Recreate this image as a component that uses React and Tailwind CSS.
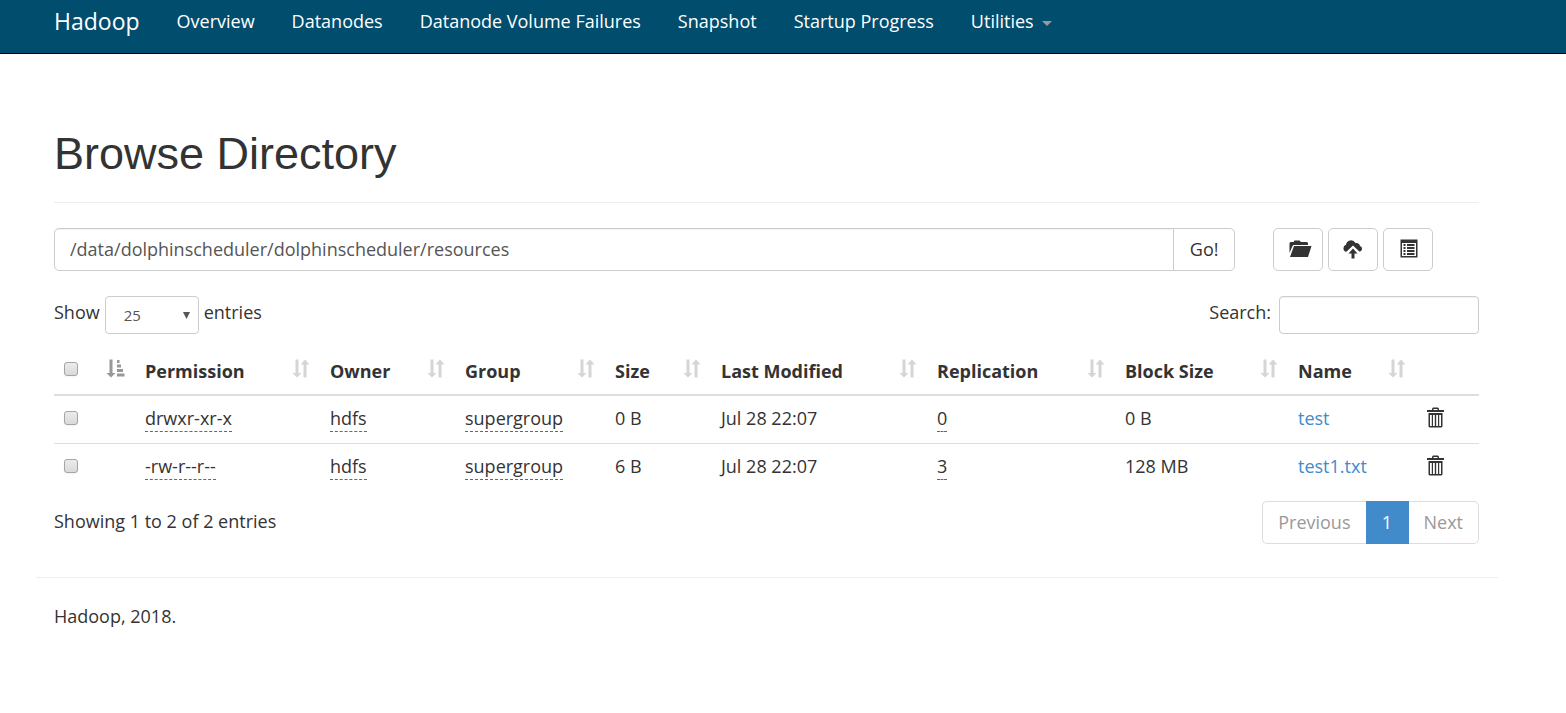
import { useState } from "react";

const navLinks = ["Overview", "Datanodes", "Datanode Volume Failures", "Snapshot", "Startup Progress"];

const columns = [
  { label: "Permission", width: "w-[185px]" },
  { label: "Owner", width: "w-[135px]" },
  { label: "Group", width: "w-[150px]" },
  { label: "Size", width: "w-[106px]" },
  { label: "Last Modified", width: "w-[216px]" },
  { label: "Replication", width: "w-[188px]" },
  { label: "Block Size", width: "w-[173px]" },
  { label: "Name", width: "w-[128px]" },
];

const files = [
  { permission: "drwxr-xr-x", owner: "hdfs", group: "supergroup", size: "0 B", modified: "Jul 28 22:07", replication: "0", block: "0 B", name: "test" },
  { permission: "-rw-r--r--", owner: "hdfs", group: "supergroup", size: "6 B", modified: "Jul 28 22:07", replication: "3", block: "128 MB", name: "test1.txt" },
];

function FolderIcon() {
  return (
    <svg width="23" height="18" viewBox="0 0 23 18" fill="#333">
      <path d="M.5 13V3L1.5 2H4.5L5.5 .5H10.5L12 2H18L19 3V5H4.5L3.5 6Z" />
      <path d="M5 6H22.5L19 17H1Z" />
    </svg>
  );
}

function UploadIcon() {
  return (
    <svg width="20" height="19" viewBox="0 0 20 19" fill="#333">
      <path d="M3.4 11.8A3.6 3.6 0 0 1 3 4.8A5 5 0 0 1 12.4 3A4 4 0 0 1 17 6A3 3 0 0 1 16.6 11.8L10 5.6Z" />
      <path d="M10 8.5L14.5 13.5H11.5V18.5H8.5V13.5H5.5Z" />
    </svg>
  );
}

function ListIcon() {
  return (
    <svg width="18" height="19" viewBox="0 0 18 19" fill="#333">
      <path fillRule="evenodd" d="M.5.5H17.5V18.5H.5ZM2 4V17H16V4Z" />
      <path d="M3.5 5H5.5V7H3.5ZM7 5H14.5V7H7ZM3.5 8H5.5V10H3.5ZM7 8H14.5V10H7ZM3.5 11H5.5V13H3.5ZM7 11H14.5V13H7ZM3.5 14H5.5V16H3.5ZM7 14H14.5V16H7Z" />
    </svg>
  );
}

function TrashIcon() {
  return (
    <svg width="18" height="21" viewBox="0 0 18 21" fill="#333">
      <path fillRule="evenodd" d="M6 3V1.8L7 .5H12L13 1.8V3H18V5H1V3ZM7.5 3H11.5V2H7.5Z" />
      <path fillRule="evenodd" d="M2.5 6H16.5V19.5L15.5 20.5H3.5L2.5 19.5ZM4 8V19H5.8V8ZM7 8V19H8.8V8ZM10.2 8V19H12V8ZM13.2 8V19H15V8Z" />
    </svg>
  );
}

function SortIcon() {
  return (
    <svg width="18" height="19" viewBox="0 0 18 19" fill="#333" className="opacity-20">
      <path d="M3.5.5H6.5V14H9.5L5 18.5L.5 14H3.5Z" />
      <path d="M11.5 18.5H14.5V5.5H17.5L13 .5L8.5 5.5H11.5Z" />
    </svg>
  );
}

function SortAscIcon() {
  return (
    <svg width="19" height="19" viewBox="0 0 19 19" fill="#333" className="opacity-50">
      <path d="M3.5.5H6.5V14H9.5L5 18.5L.5 14H3.5Z" />
      <path d="M11 1H13.5V4H11ZM11 5.5H15V8.5H11ZM11 10H17V13H11ZM11 14.5H18.5V17.5H11Z" />
    </svg>
  );
}

function Checkbox({ label, checked, onChange }) {
  return (
    <input
      type="checkbox"
      aria-label={label}
      checked={checked}
      onChange={onChange}
      className="block w-3.5 h-3.5 appearance-none rounded-[3px] border border-[#a5a5a5] bg-linear-to-b from-[#ececec] to-[#d9d9d9] shadow-xs checked:bg-[#428bca]"
    />
  );
}

function Editable({ children }) {
  return <span className="inline-block leading-[26px] border-b border-dashed border-[#0088cc]">{children}</span>;
}

export default function App() {
  const [path, setPath] = useState("/data/dolphinscheduler/dolphinscheduler/resources");
  const [search, setSearch] = useState("");
  const [pageSize, setPageSize] = useState("25");
  const [selected, setSelected] = useState([]);

  const toggle = (name) => {
    setSelected((prev) => (prev.includes(name) ? prev.filter((n) => n !== name) : [...prev, name]));
  };
  const toggleAll = () => {
    setSelected((prev) => (prev.length === files.length ? [] : files.map((f) => f.name)));
  };

  return (
    <div className="bg-white text-[#333] text-lg leading-[26px] font-['Open_Sans','Noto_Sans',sans-serif]">
      <header className="h-[54px] bg-[#004d6e] border-b border-black text-white">
        <nav className="flex items-center h-[42px] pl-[54px] gap-[37px] whitespace-nowrap">
          <a href="#" className="text-[23px]">Hadoop</a>
          {navLinks.map((link) => (
            <a key={link} href="#">{link}</a>
          ))}
          <a href="#" className="flex items-center gap-2">
            Utilities
            <svg width="10" height="5" viewBox="0 0 10 5" fill="#999" className="mt-1"><path d="M0 0H10L5 5Z" /></svg>
          </a>
        </nav>
      </header>

      <div className="pl-9 pr-[68px]">
        <main className="pl-[18px] pr-[19px] pt-[75px]">
          <h1 className="pb-6 border-b border-[#eee] text-[45px] leading-[49px] font-['Liberation_Sans',sans-serif]">
            Browse Directory
          </h1>

          <div className="grid grid-cols-12 gap-[38px] mt-[25px]">
            <form className="col-span-10 flex h-[43px]" onSubmit={(e) => e.preventDefault()}>
              <input
                type="text"
                aria-label="Directory"
                value={path}
                onChange={(e) => setPath(e.target.value)}
                className="grow min-w-0 px-[15px] pb-0.5 rounded-l-[5px] border border-[#ccc] text-[#555] inset-shadow-xs"
              />
              <button type="submit" className="w-[62px] -ml-px pb-0.5 rounded-r-[5px] border border-[#ccc]">Go!</button>
            </form>
            <div className="col-span-2 flex gap-[5px]">
              <button type="button" aria-label="Create directory" className="flex items-center justify-center w-[50px] h-[43px] pl-1 pb-0.5 rounded-[5px] border border-[#ccc]">
                <FolderIcon />
              </button>
              <button type="button" aria-label="Upload files" className="flex items-center justify-center w-[50px] h-[43px] rounded-[5px] border border-[#ccc]">
                <UploadIcon />
              </button>
              <button type="button" aria-label="Cut and paste" className="flex items-center justify-center w-[50px] h-[43px] pl-0.5 pb-0.5 rounded-[5px] border border-[#ccc]">
                <ListIcon />
              </button>
            </div>
          </div>

          <div className="flex justify-between mt-[25px]">
            <label className="flex gap-[5px]">
              <span className="pt-[3px]">Show</span>
              <span className="relative">
                <select
                  value={pageSize}
                  onChange={(e) => setPageSize(e.target.value)}
                  className="w-[94px] h-[38px] pl-[18px] appearance-none rounded-sm border border-[#ccc] text-[#555] text-[15px] bg-white"
                >
                  <option>10</option>
                  <option>25</option>
                  <option>50</option>
                  <option>100</option>
                </select>
                <svg width="7" height="7" viewBox="0 0 8 8" fill="#555" className="absolute right-[9px] top-4 pointer-events-none">
                  <path d="M0 0H8L4 8Z" />
                </svg>
              </span>
              <span className="pt-[3px]">entries</span>
            </label>
            <label className="flex gap-2">
              <span className="pt-[3px]">Search:</span>
              <input
                type="search"
                value={search}
                onChange={(e) => setSearch(e.target.value)}
                className="w-[200px] h-[38px] px-3 rounded-sm border border-[#ccc] text-[15px] inset-shadow-xs"
              />
            </label>
          </div>

          <table className="w-full table-fixed mt-[13px] text-left whitespace-nowrap">
            <thead>
              <tr className="h-12 border-b-2 border-[#ddd]">
                <th className="w-[81px] px-2.5">
                  <div className="flex items-center justify-between pb-1">
                    <Checkbox label="Select all" checked={selected.length === files.length} onChange={toggleAll} />
                    <SortAscIcon />
                  </div>
                </th>
                {columns.map((col) => (
                  <th key={col.label} className={`${col.width} px-2.5 font-bold`}>
                    <div className="flex items-center justify-between">
                      {col.label}
                      <span className="pb-1"><SortIcon /></span>
                    </div>
                  </th>
                ))}
                <th className="w-[63px]"></th>
              </tr>
            </thead>
            <tbody>
              {files.map((file) => (
                <tr key={file.name} className="h-12 border-b border-[#ddd] last:border-b-0">
                  <td className="px-2.5 pb-0.5">
                    <Checkbox label={`Select ${file.name}`} checked={selected.includes(file.name)} onChange={() => toggle(file.name)} />
                  </td>
                  <td className="px-2.5 pb-0.5"><Editable>{file.permission}</Editable></td>
                  <td className="px-2.5 pb-0.5"><Editable>{file.owner}</Editable></td>
                  <td className="px-2.5 pb-0.5"><Editable>{file.group}</Editable></td>
                  <td className="px-2.5 pb-0.5">{file.size}</td>
                  <td className="px-2.5 pb-0.5">{file.modified}</td>
                  <td className="px-2.5 pb-0.5"><Editable>{file.replication}</Editable></td>
                  <td className="px-2.5 pb-0.5">{file.block}</td>
                  <td className="px-2.5 pb-0.5"><a href="#" className="text-[#428bca]">{file.name}</a></td>
                  <td className="px-2.5 pb-1">
                    <button type="button" aria-label={`Delete ${file.name}`} className="block"><TrashIcon /></button>
                  </td>
                </tr>
              ))}
            </tbody>
          </table>

          <div className="flex justify-between mt-2.5">
            <p className="pt-[7px]">Showing 1 to 2 of 2 entries</p>
            <div className="flex h-[43px] text-[#999]">
              <button type="button" className="px-[15px] pb-0.5 rounded-l-[5px] border border-r-0 border-[#ddd]">Previous</button>
              <button type="button" className="w-[43px] pb-0.5 bg-[#428bca] text-white">1</button>
              <button type="button" className="px-[15px] pb-0.5 rounded-r-[5px] border border-l-0 border-[#ddd]">Next</button>
            </div>
          </div>
        </main>

        <footer className="mt-[33px] px-[18px] pt-[25px] border-t border-[#eee]">
          <p>Hadoop, 2018.</p>
        </footer>
      </div>
    </div>
  );
}
